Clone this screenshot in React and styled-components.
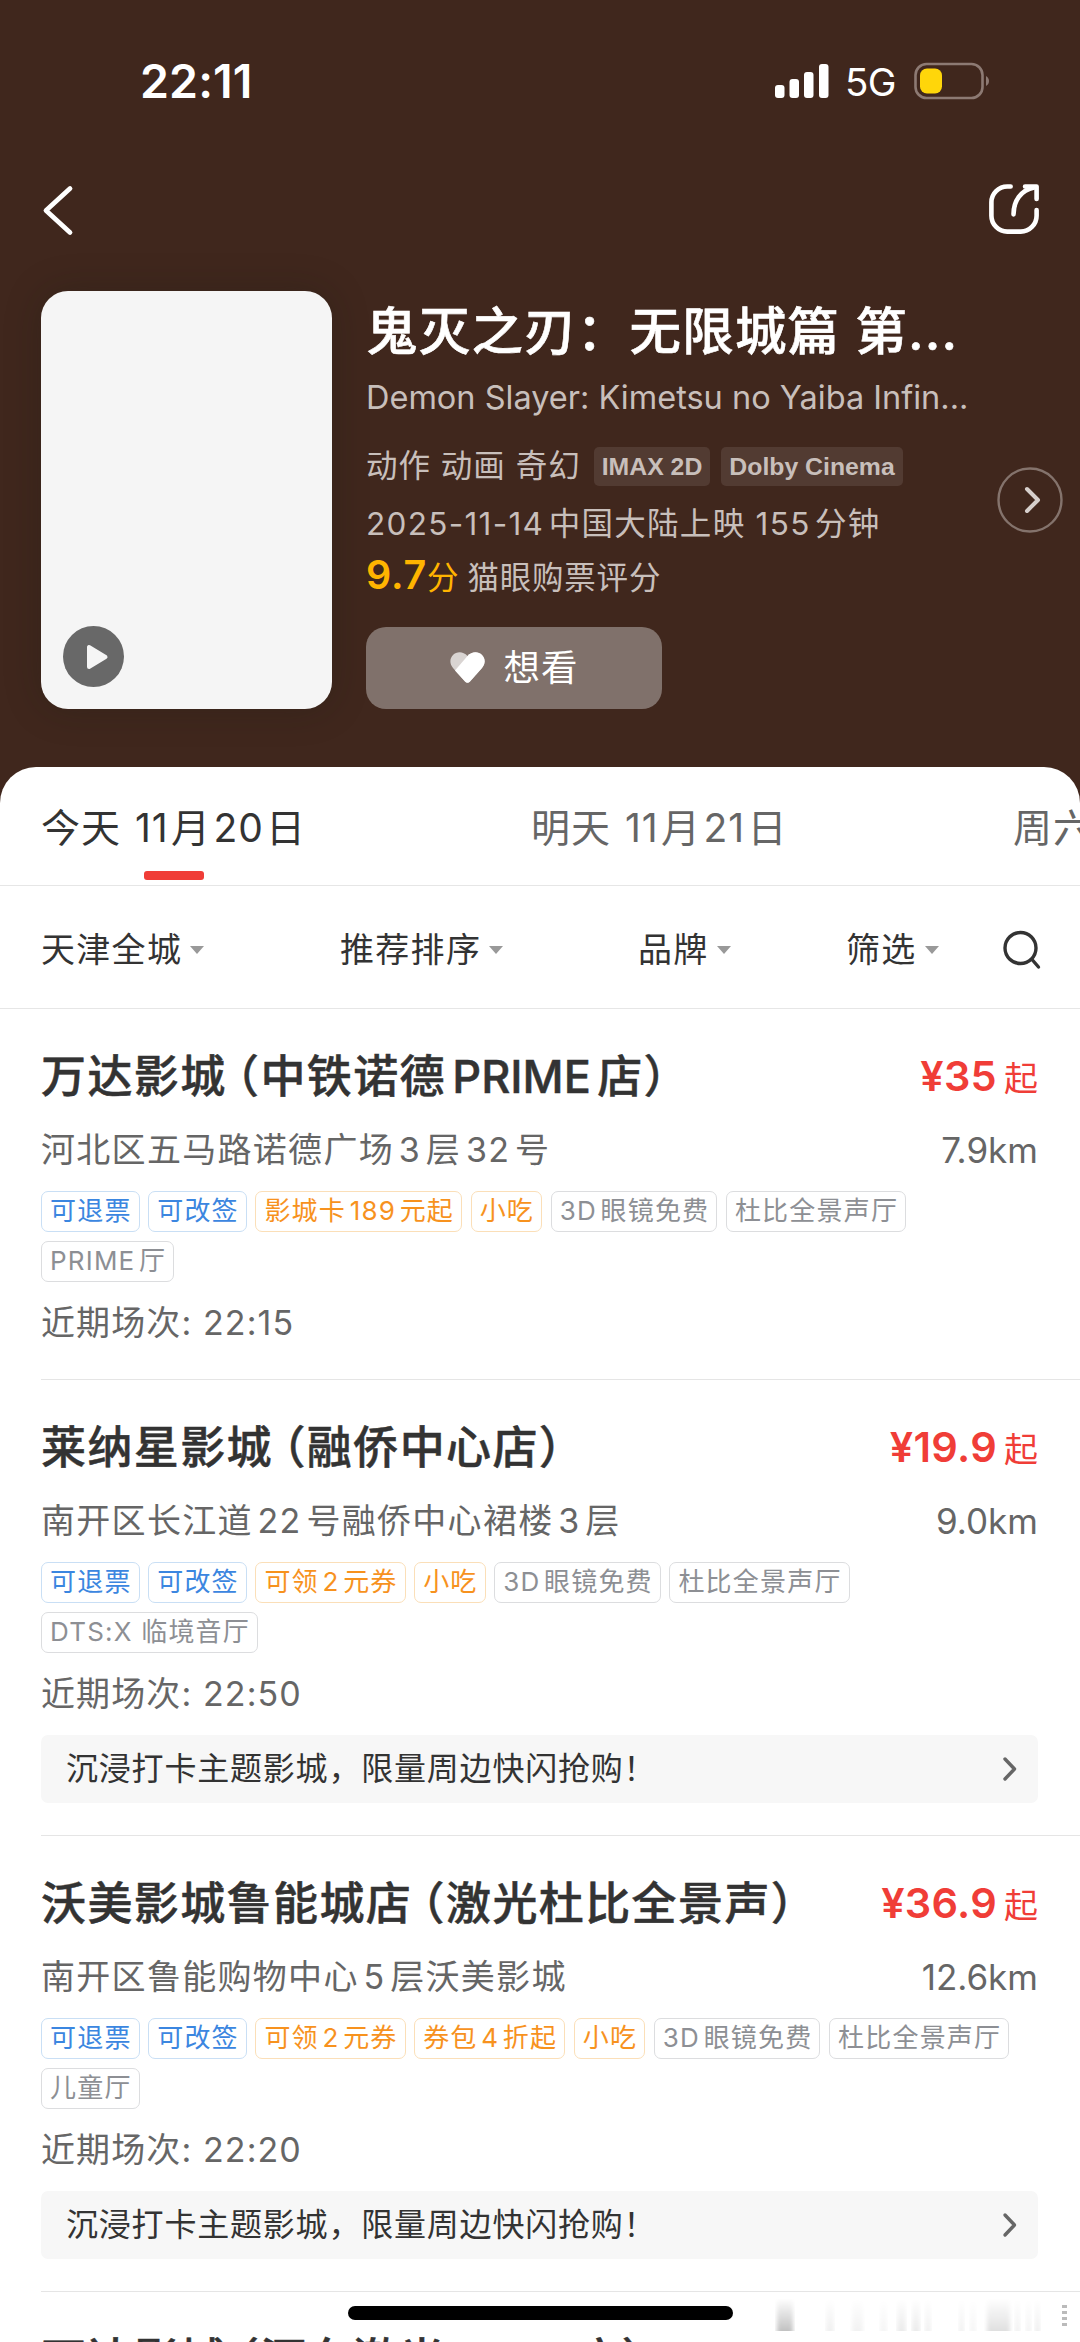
import React from "react";
import styled, { createGlobalStyle } from "styled-components";

const GlobalStyle = createGlobalStyle`
	* {
		box-sizing: border-box;
	}

	body {
		margin: 0;
		background: #fff;
		font-family: "Inter", "Noto Sans CJK SC", sans-serif;
	}
`;

const Page = styled.div`
	position: relative;
	width: 1080px;
	height: 2342px;
	overflow: hidden;
	background: #40271d;
`;

const StatusBar = styled.div`
	display: flex;
	align-items: center;
	justify-content: space-between;
	height: 161px;
	padding: 0 90px 0 140px;
	color: #fff;
`;

const Clock = styled.div`
	font-size: 46.5px;
	font-weight: 600;
	letter-spacing: 0.1px;
`;

const StatusIcons = styled.div`
	display: flex;
	align-items: center;
`;

const Network = styled.span`
	width: 85px;
	padding: 3px 0 0 16px;
	font-size: 38.5px;
	line-height: 40px;
	letter-spacing: -0.6px;
`;

const NavBar = styled.div`
	display: flex;
	align-items: center;
	justify-content: space-between;
	height: 98px;
	padding: 0 41px 0 38px;
`;

const Film = styled.div`
	display: flex;
	height: 508px;
	padding: 32px 16px 58px 41px;
`;

const Poster = styled.div`
	display: flex;
	align-items: flex-end;
	width: 291px;
	height: 418px;
	padding: 22px;
	border-radius: 27px;
	background: #f5f5f5;
	box-shadow: 0 0 36px rgba(20, 26, 18, 0.25);
`;

const FilmInfo = styled.div`
	width: 616px;
	margin-left: 34px;
	padding-top: 10px;
	color: #c8bfbb;
`;

const FilmTitle = styled.h1`
	height: 60px;
	margin: 0 0 17px;
	font-size: 51.5px;
	font-weight: 500;
	line-height: 60px;
	letter-spacing: 1.2px;
	white-space: nowrap;
	color: #fff;
	-webkit-text-stroke: 0.6px currentColor;
`;

const FilmLine = styled.div`
	display: flex;
	align-items: center;
	height: 40px;
	margin-bottom: ${(props) => props.$gap || 0}px;
	font-size: ${(props) => props.$size || 31.5}px;
	line-height: 40px;
	letter-spacing: ${(props) => props.$spacing || 0}px;
	white-space: nowrap;
`;

const Format = styled.span`
	height: 39px;
	margin-left: ${(props) => props.$gap}px;
	padding: 0 8px;
	border-radius: 5px;
	background: #523b32;
	font-family: "Liberation Sans", sans-serif;
	font-size: 24.8px;
	font-weight: bold;
	line-height: 39px;
	letter-spacing: 0;
`;

const Score = styled.div`
	display: flex;
	align-items: baseline;
	height: 44px;
	margin-bottom: 30px;
	font-size: 31.5px;
	line-height: 44px;
	letter-spacing: 0.8px;

	b {
		font-size: 39.5px;
		font-weight: 600;
		color: #ffb400;
	}

	i {
		margin-right: 8px;
		font-style: normal;
		color: #ffb400;
	}
`;

const WantButton = styled.button`
	display: flex;
	align-items: center;
	justify-content: center;
	gap: 19px;
	width: 296px;
	height: 82px;
	padding: 0;
	border: none;
	border-radius: 20px;
	background: #80716b;
	color: #fff;
	font-family: inherit;
	font-size: 36.5px;
	line-height: 82px;
	letter-spacing: 1px;
`;

const MoreButton = styled.div`
	display: flex;
	align-items: center;
	margin-left: 15px;
`;

const Sheet = styled.div`
	height: 1620px;
	border-radius: 36px 36px 0 0;
	background: #fff;
`;

const Tabs = styled.div`
	display: grid;
	grid-template-columns: 490px 482px 320px;
	height: 119px;
	padding-left: 41px;
	border-bottom: 1.5px solid #e6e6e6;
	overflow: hidden;
`;

const Tab = styled.div`
	display: flex;
	flex-direction: column;
	align-items: flex-start;
	padding-top: 36px;
	font-size: 39px;
	line-height: 50px;
	letter-spacing: 1px;
	word-spacing: 2px;
	white-space: nowrap;
	color: ${(props) => (props.$active ? "#333" : "#666")};

	&::after {
		content: "";
		display: ${(props) => (props.$active ? "block" : "none")};
		width: 60px;
		height: 9px;
		margin: 18px 0 0 103px;
		border-radius: 3px;
		background: #f03d37;
	}
`;

const Filters = styled.div`
	display: grid;
	grid-template-columns: 299px 298px 208px 157px 60px;
	align-items: center;
	height: 123px;
	padding: 5px 0 0 41px;
	border-bottom: 1.5px solid #e6e6e6;
`;

const Filter = styled.div`
	display: flex;
	align-items: center;
	font-size: 34px;
	line-height: 50px;
	letter-spacing: 1.3px;
	color: #333;

	&::after {
		content: "";
		margin-left: 8px;
		border: 7.5px solid transparent;
		border-top: 8px solid #999;
		border-bottom: none;
	}
`;

const Cinema = styled.div`
	margin-left: 41px;
	padding: 38px 42px 32px 0;
	border-bottom: 1px solid #e5e5e5;
`;

const Row = styled.div`
	display: flex;
	align-items: center;
	justify-content: space-between;
	height: 60px;
	white-space: nowrap;
`;

const Latin = styled.span`
	margin-left: ${(props) => (props.$before ? props.$gap : 0)}em;
	margin-right: ${(props) => (props.$after ? props.$gap : 0)}em;
`;

const OpenParen = styled.span`
	margin-left: -0.28em;
`;

const CinemaName = styled.h2`
	margin: 0;
	font-size: 45px;
	font-weight: 500;
	line-height: 60px;
	letter-spacing: 1.4px;
	color: #333;
	-webkit-text-stroke: 0.5px currentColor;

	${Latin} {
		letter-spacing: 0;
	}
`;

const Price = styled.div`
	display: flex;
	align-items: baseline;
	margin-top: -3px;
	font-size: 41.5px;
	font-weight: 600;
	line-height: 60px;
	letter-spacing: 0.3px;
	color: #f03d37;

	small {
		margin-left: 7px;
		font-size: 34px;
		font-weight: 400;
		line-height: 40px;
		letter-spacing: 0;
	}
`;

const Address = styled(Row)`
	height: 50px;
	margin: 18px 0 16px;
	font-size: 34px;
	line-height: 50px;
	letter-spacing: 1.3px;
	color: #666;
`;

const Distance = styled.span`
	font-size: 35px;
	letter-spacing: 0;
`;

const Tags = styled.div`
	display: flex;
	flex-wrap: wrap;
	gap: 9px 8.6px;
`;

const tagColors = {
	blue: ["#3b86e0", "#c9dff5"],
	orange: ["#f7921e", "#fbdfb8"],
	gray: ["#8d8f94", "#dcdddf"],
};

const Tag = styled.span`
	height: 41px;
	padding: 0 7px 0 8px;
	border: 1.5px solid ${(props) => tagColors[props.$kind][1]};
	border-radius: 7px;
	font-size: 26px;
	line-height: 38px;
	letter-spacing: 1.2px;
	color: ${(props) => tagColors[props.$kind][0]};
`;

const Showtime = styled.div`
	height: 49px;
	margin-top: 16px;
	font-size: 34px;
	line-height: 50px;
	letter-spacing: 1.1px;
	color: #666;
`;

const Promo = styled(Row)`
	height: 68px;
	margin-top: 17px;
	padding: 0 20px 0 25px;
	border-radius: 7px;
	background: #f7f7f7;
	font-size: 32px;
	line-height: 68px;
	letter-spacing: 0.8px;
	color: #333;
`;

const HomeIndicator = styled.div`
	position: absolute;
	left: 348px;
	top: 2306px;
	width: 385px;
	height: 14px;
	border-radius: 7px;
	background: #000;
`;

const Streaks = styled.svg`
	position: absolute;
	left: 770px;
	top: 2294px;
`;

const isHan = (text) => !!text && /[\u4e00-\u9fff]/.test(text);

// Adds the small gap between Chinese characters and Latin runs
const Mixed = ({ text, gap = 0.14 }) => {
	const parts = text.split(/([A-Za-z0-9:.-]+|（)/).filter(Boolean);
	return parts.map((part, i) => {
		if (part === "（") return <OpenParen key={i}>{part}</OpenParen>;
		if (!/[A-Za-z0-9]/.test(part)) return part;
		const prev = parts[i - 1];
		const next = parts[i + 1];
		return (
			<Latin
				key={i}
				$gap={gap}
				$before={isHan(prev && prev[prev.length - 1])}
				$after={isHan(next && next[0])}
			>
				{part}
			</Latin>
		);
	});
};

const Signal = () => (
	<svg width="54" height="36" fill="#fff">
		<rect x="0" y="22" width="9.5" height="13" rx="3" />
		<rect x="14.5" y="16" width="9.5" height="19" rx="3" />
		<rect x="29" y="9" width="9.5" height="26" rx="3" />
		<rect x="44" y="1" width="9.5" height="34" rx="3" />
	</svg>
);

const Battery = () => (
	<svg width="76" height="38" fill="none">
		<rect x="1.5" y="2" width="67" height="34" rx="11" stroke="#8d7a73" strokeWidth="2.6" />
		<path d="M72 14c4 2 4 8 0 10z" fill="#8d7a73" />
		<rect x="6" y="6.5" width="22" height="25" rx="7" fill="#ffd60a" />
	</svg>
);

const BackIcon = () => (
	<svg width="40" height="56" fill="none" stroke="#fff" strokeWidth="4.8">
		<path d="M32 6.5L8 28.5L32 50.5" strokeLinecap="round" strokeLinejoin="round" />
	</svg>
);

const ShareIcon = () => (
	<svg width="50" height="52" viewBox="0 1 52 54" fill="none" stroke="#fff" strokeWidth="4.8">
		<g strokeLinecap="round" strokeLinejoin="round">
			<path d="M22.5 3.5H19C10 3.5 2.5 11 2.5 20V34C2.5 43 10 50.5 19 50.5H33C42 50.5 49.5 43 49.5 34V28" />
			<path d="M25.5 32.5C25.5 19 33 7 47 4.5" />
			<path d="M37.5 3.5H49.5V16.5" />
		</g>
	</svg>
);

const PlayIcon = () => (
	<svg width="61" height="61">
		<circle cx="30.5" cy="30.5" r="30.5" fill="#686868" />
		<path d="M26 21V41L42.5 31Z" fill="#f5f5f5" stroke="#f5f5f5" strokeWidth="4" strokeLinejoin="round" />
	</svg>
);

const HeartIcon = () => (
	<svg width="35" height="32" viewBox="0 0 35 32">
		<path
			d="M17.5 4C13-1 6.5-.5 3 3S-.5 12 3 16L15 29.5Q17.5 32 20 29.5L32 16C35.5 12 35.5 6.5 32 3S22-1 17.5 4Z"
			fill="#d9d4d2"
		/>
		<path
			d="M17.5 4C22-1 28.5-.5 32 3S35.5 12 32 16L20 29.5Q17.5 32 15 29.5L5 18.5Z"
			fill="#fff"
		/>
	</svg>
);

const CircleArrow = () => (
	<svg width="66" height="66" fill="none">
		<circle cx="33" cy="33" r="31.5" stroke="#84736c" strokeWidth="2.4" />
		<path d="M30 22L41 33L30 44" stroke="#d6cfcc" strokeWidth="4" strokeLinecap="round" strokeLinejoin="round" />
	</svg>
);

const SearchIcon = () => (
	<svg width="40" height="40" fill="none" stroke="#333" strokeWidth="3.4">
		<circle cx="17.5" cy="18" r="15.5" />
		<path d="M29 29.5L35.5 37" strokeLinecap="round" />
	</svg>
);

const PromoArrow = () => (
	<svg width="16" height="26" fill="none" stroke="#666" strokeWidth="3.4">
		<path d="M3 3L12.5 13L3 23" strokeLinecap="round" strokeLinejoin="round" />
	</svg>
);

// x, width, opacity
const streaks = [
	[7, 16, 0.24],
	[56, 8, 0.06],
	[82, 11, 0.05],
	[110, 7, 0.04],
	[127, 9, 0.08],
	[142, 8, 0.08],
	[155, 6, 0.06],
	[189, 5, 0.06],
	[200, 6, 0.04],
	[217, 23, 0.12],
	[245, 5, 0.06],
	[256, 5, 0.05],
	[265, 5, 0.07],
];

const cinemas = [
	{
		name: "万达影城（中铁诺德PRIME店）",
		price: "35",
		address: "河北区五马路诺德广场3层32号",
		distance: "7.9km",
		offers: ["影城卡189元起", "小吃"],
		halls: ["3D眼镜免费", "杜比全景声厅", "PRIME厅"],
		time: "22:15",
	},
	{
		name: "莱纳星影城（融侨中心店）",
		price: "19.9",
		address: "南开区长江道22号融侨中心裙楼3层",
		distance: "9.0km",
		offers: ["可领2元券", "小吃"],
		halls: ["3D眼镜免费", "杜比全景声厅", "DTS:X 临境音厅"],
		time: "22:50",
		promo: "沉浸打卡主题影城，限量周边快闪抢购！",
	},
	{
		name: "沃美影城鲁能城店（激光杜比全景声）",
		price: "36.9",
		address: "南开区鲁能购物中心5层沃美影城",
		distance: "12.6km",
		offers: ["可领2元券", "券包4折起", "小吃"],
		halls: ["3D眼镜免费", "杜比全景声厅", "儿童厅"],
		time: "22:20",
		promo: "沉浸打卡主题影城，限量周边快闪抢购！",
	},
];

const CinemaItem = ({ cinema }) => (
	<Cinema>
		<Row>
			<CinemaName>
				<Mixed text={cinema.name} />
			</CinemaName>
			<Price>
				¥{cinema.price}
				<small>起</small>
			</Price>
		</Row>
		<Address>
			<span>
				<Mixed text={cinema.address} />
			</span>
			<Distance>{cinema.distance}</Distance>
		</Address>
		<Tags>
			<Tag $kind="blue">可退票</Tag>
			<Tag $kind="blue">可改签</Tag>
			{cinema.offers.map((offer) => (
				<Tag key={offer} $kind="orange">
					<Mixed text={offer} />
				</Tag>
			))}
			{cinema.halls.map((hall) => (
				<Tag key={hall} $kind="gray">
					<Mixed text={hall} />
				</Tag>
			))}
		</Tags>
		<Showtime>近期场次: {cinema.time}</Showtime>
		{cinema.promo && (
			<Promo>
				<span>{cinema.promo}</span>
				<PromoArrow />
			</Promo>
		)}
	</Cinema>
);

const App = () => (
	<Page>
		<GlobalStyle />
		<StatusBar>
			<Clock>22:11</Clock>
			<StatusIcons>
				<Signal />
				<Network>5G</Network>
				<Battery />
			</StatusIcons>
		</StatusBar>
		<NavBar>
			<BackIcon />
			<ShareIcon />
		</NavBar>
		<Film>
			<Poster>
				<PlayIcon />
			</Poster>
			<FilmInfo>
				<FilmTitle>鬼灭之刃：无限城篇 第...</FilmTitle>
				<FilmLine $size={32.5} $gap={28}>
					Demon Slayer: Kimetsu no Yaiba Infin...
				</FilmLine>
				<FilmLine $spacing={1} $gap={18}>
					动作 动画 奇幻
					<Format $gap={13}>IMAX 2D</Format>
					<Format $gap={11}>Dolby Cinema</Format>
				</FilmLine>
				<FilmLine $spacing={1.3} $gap={9}>
					<span>
						<Mixed text="2025-11-14中国大陆上映 155分钟" />
					</span>
				</FilmLine>
				<Score>
					<b>9.7</b>
					<i>分</i>
					猫眼购票评分
				</Score>
				<WantButton>
					<HeartIcon />
					想看
				</WantButton>
			</FilmInfo>
			<MoreButton>
				<CircleArrow />
			</MoreButton>
		</Film>
		<Sheet>
			<Tabs>
				<Tab $active>
					<span>
						<Mixed text="今天 11月20日" gap={0.06} />
					</span>
				</Tab>
				<Tab>
					<span>
						<Mixed text="明天 11月21日" gap={0.06} />
					</span>
				</Tab>
				<Tab>周六</Tab>
			</Tabs>
			<Filters>
				<Filter>天津全城</Filter>
				<Filter>推荐排序</Filter>
				<Filter>品牌</Filter>
				<Filter>筛选</Filter>
				<SearchIcon />
			</Filters>
			{cinemas.map((cinema) => (
				<CinemaItem key={cinema.name} cinema={cinema} />
			))}
			<Cinema>
				<CinemaName>
					<Mixed text="万达影城（河东激光IMAX店）" />
				</CinemaName>
			</Cinema>
		</Sheet>
		<Streaks width="310" height="40">
			<defs>
				<linearGradient id="fade" x1="0" y1="0" x2="0" y2="1">
					<stop offset="0" stopColor="#000" stopOpacity="0" />
					<stop offset="1" stopColor="#000" />
				</linearGradient>
				<filter id="soft">
					<feGaussianBlur stdDeviation="2 0" />
				</filter>
			</defs>
			{streaks.map(([x, width, opacity]) => (
				<rect key={x} x={x} y="4" width={width} height="33" fill="url(#fade)" opacity={opacity} filter="url(#soft)" />
			))}
			{[11, 17, 23, 29].map((y) => (
				<rect key={y} x="292" y={y} width="5" height="3" fill="#bbb" />
			))}
		</Streaks>
		<HomeIndicator />
	</Page>
);

export default App;
